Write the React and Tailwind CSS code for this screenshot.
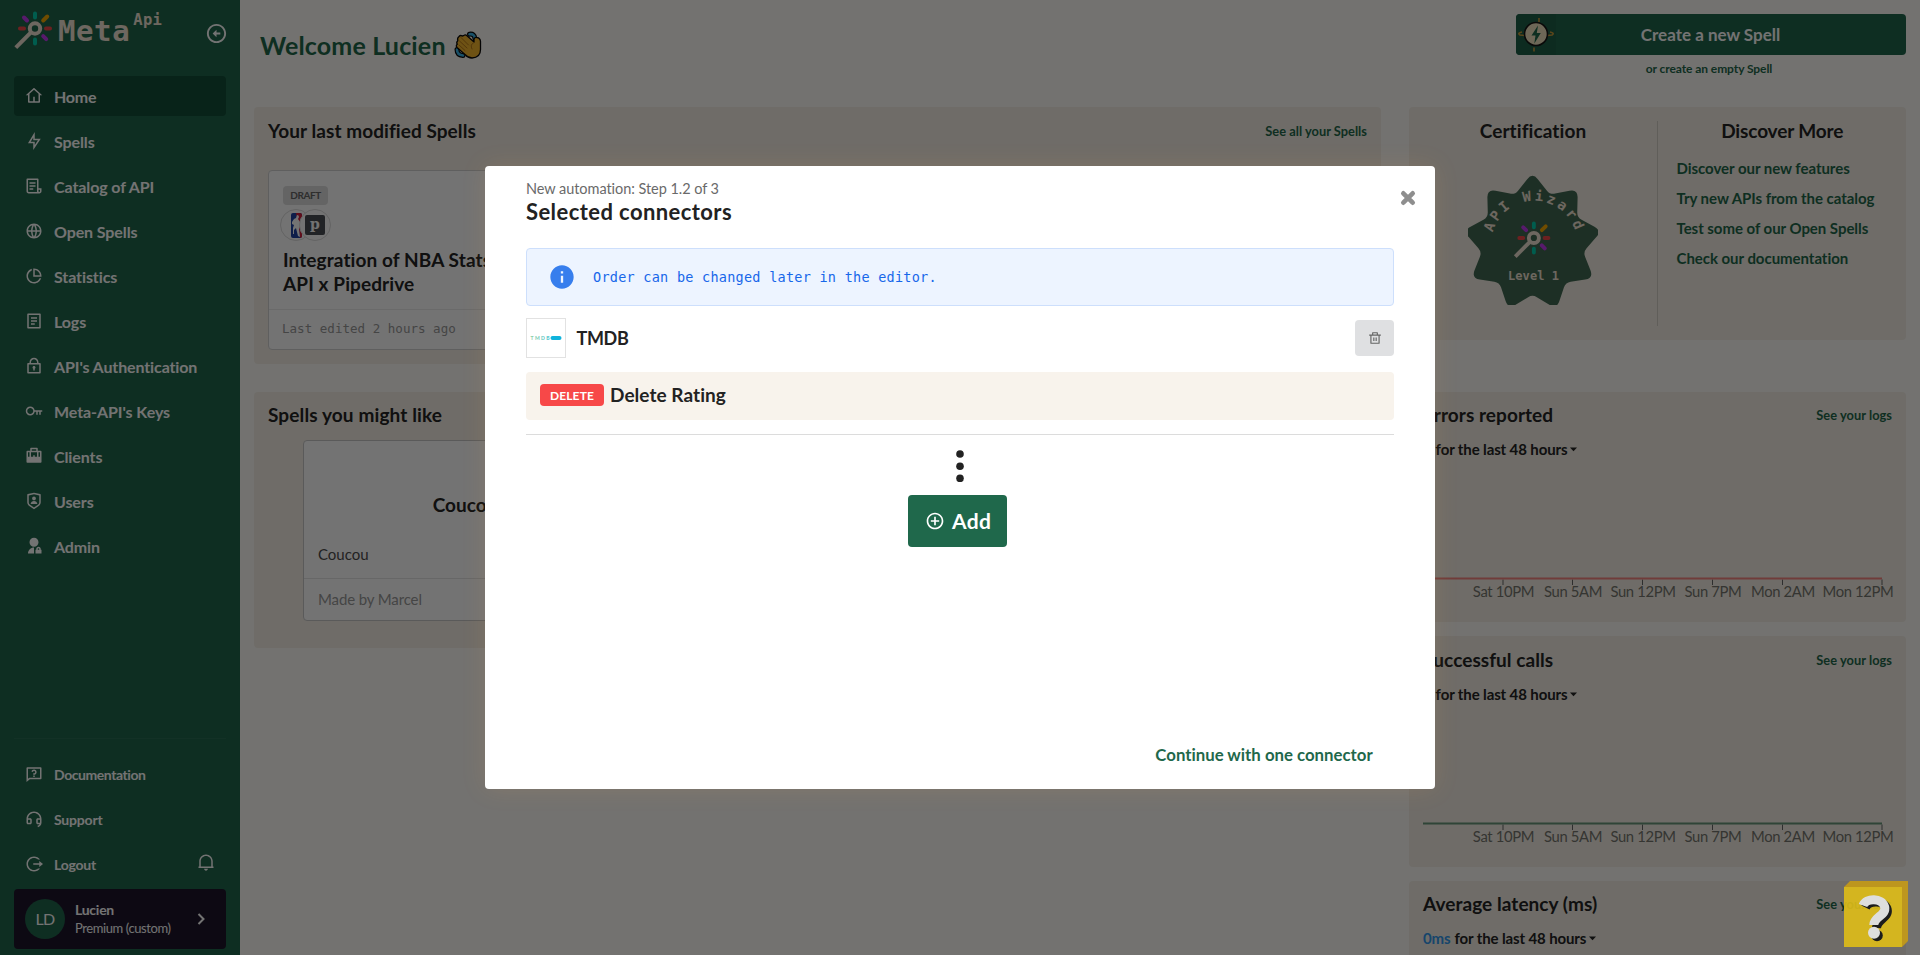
import {
  RiHome4Line, RiFlashlightLine, RiFileList3Line, RiGlobalLine, RiPieChartLine, RiFileList2Line,
  RiLock2Line, RiKeyLine, RiBriefcase5Fill, RiShieldUserLine, RiAdminFill, RiQuestionnaireLine,
  RiCustomerServiceLine, RiLogoutCircleRLine, RiNotification2Line, RiArrowLeftCircleLine,
  RiAddCircleLine, RiDeleteBinLine, RiInformationFill,
} from "react-icons/ri";

const NAV = [
  ["Home", RiHome4Line, "tracking-[-0.25px]"],
  ["Spells", RiFlashlightLine, "tracking-[-0.1px]"],
  ["Catalog of API", RiFileList3Line, "tracking-[-0.1px]"],
  ["Open Spells", RiGlobalLine, "tracking-[-0.1px]"],
  ["Statistics", RiPieChartLine, "tracking-[-0.1px]"],
  ["Logs", RiFileList2Line, "tracking-[-0.1px]"],
  ["API's Authentication", RiLock2Line, "tracking-[-0.12px]"],
  ["Meta-API's Keys", RiKeyLine, "tracking-[-0.08px]"],
  ["Clients", RiBriefcase5Fill, "tracking-[-0.1px]"],
  ["Users", RiShieldUserLine, "tracking-[-0.1px]"],
  ["Admin", RiAdminFill, "tracking-[-0.1px]"],
];

const FOOT = [
  ["Documentation", RiQuestionnaireLine, "tracking-[-0.43px]"],
  ["Support", RiCustomerServiceLine, "tracking-[-0.19px]"],
  ["Logout", RiLogoutCircleRLine, "tracking-[-0.22px]"],
];

function WandShape() {
  return (
    <g strokeLinecap="round" fill="none">
      <g strokeWidth="4">
        <path d="M21 3.5v4M21 29.500v4" stroke="#00cfae" />
        <path d="M6 18.500h4M32 18.500h4" stroke="#f04848" />
        <path d="M10 7.500l3 3M29.200 26.200l3 3" stroke="#c23bf0" />
        <path d="M29.200 10.500l4-4" stroke="#f5a800" />
      </g>
      <g stroke="#f1e4d5" strokeLinecap="butt" strokeWidth="4">
        <circle cx="21" cy="18.500" r="5.200" />
        <path d="M17.200 22.200L1.800 37.700" />
      </g>
    </g>
  );
}

function Sidebar() {
  return (
    <aside className="flex w-[240px] shrink-0 flex-col bg-[#21664c] px-3.5 pb-1.5 text-white">
      <div className="flex h-[76px] items-start justify-between">
        <div className="flex items-start pt-2.5">
          <svg width="44" height="42" viewBox="0 0 44 42" className="shrink-0"><WandShape /></svg>
          <span className="font-['DejaVu_Sans_Mono',monospace] text-[29px] font-bold leading-[42px] tracking-[0.6px] text-[#f1e4d5]">Meta</span>
          <span className="ml-[3px] font-['DejaVu_Sans_Mono',monospace] text-[15.500px] font-bold leading-[20px] tracking-[0.3px] text-[#f1e4d5]">Api</span>
        </div>
        <RiArrowLeftCircleLine className="mr-[-2px] mt-[21.5px] size-[23px]" />
      </div>
      <nav className="flex flex-col gap-[5px]">
        {NAV.map(([label, Icon, tr], i) => (
          <div key={label} className={`flex h-10 items-center gap-[11px] rounded pl-[11px] ${i === 0 ? "bg-[#124e38]" : ""}`}>
            <Icon className="size-[18px]" />
            <span className={`pt-px text-[16px] font-bold leading-5 ${tr}`}>{label}</span>
          </div>
        ))}
      </nav>
      <div className="flex-1" />
      <div className="h-px bg-[#2b6e55]" />
      <div className="mt-[15px] flex flex-col gap-[5px]">
        {FOOT.map(([label, Icon, tr]) => (
          <div key={label} className="flex h-10 items-center gap-[11px] pl-[11px]">
            <Icon className="size-[18px]" />
            <span className={`pt-px text-[14px] font-bold leading-5 ${tr}`}>{label}</span>
            {label === "Logout" && <RiNotification2Line className="mb-1 ml-auto mr-[11px] size-[18px]" />}
          </div>
        ))}
      </div>
      <div className="mt-[5px] flex h-[60px] items-center rounded bg-[#1d162c] pl-[11px]">
        <div className="flex size-10 items-center justify-center rounded-full bg-[#21664c] text-[16px] tracking-[-0.6px]">LD</div>
        <div className="ml-2.5 flex flex-col">
          <span className="text-[14px] font-bold leading-[19px] tracking-[-0.26px]">Lucien</span>
          <span className="text-[13px] leading-[19px] tracking-[-0.42px]">Premium (custom)</span>
        </div>
        <svg width="8" height="12" viewBox="0 0 8 12" className="ml-[27px]"><path d="M1.500 1l5 5-5 5" fill="none" stroke="white" strokeWidth="2" /></svg>
      </div>
    </aside>
  );
}

function WavingHand() {
  return (
    <svg width="28" height="28" viewBox="0 0 28 28">
      <g fill="none" stroke="#0a0a0a" strokeWidth="5" strokeLinecap="round">
        <path d="M15.500 3.200q5-.7 5.500 4.500M3 18.500q0 5.500 6 6" />
      </g>
      <g fill="none" stroke="#3bb3e6" strokeWidth="2.600" strokeLinecap="round">
        <path d="M15.500 3.200q5-.7 5.500 4.500M3 18.500q0 5.500 6 6" />
      </g>
      <path d="M5 5.500q1.500-1.700 3.200-.4L10 4.300q1.500-1 3 .4l7 6.300V8.500q.3-2.500 3-2 3.200.5 3.500 4v8q0 8-8.500 8.500-4 0-7-3.500L3 16.500q-1.500-2 .3-3.200-1.300-2 .5-3.600-.8-2.700 1.200-4.200z" fill="#f4b52e" stroke="#0a0a0a" strokeWidth="1.300" strokeLinejoin="round" />
      <path d="M7 6.500l7.500 7.500M5.500 10l7.500 7M5 14l6 5.500M20 11.500q-4.500 2-2 6.500" fill="none" stroke="#b87a18" strokeWidth="1" strokeLinecap="round" />
    </svg>
  );
}

function SpellOrb() {
  return (
    <svg width="40" height="41" viewBox="0 0 40 41" className="shrink-0">
      <rect width="40" height="41" fill="#1e6047" />
      <g fill="none" stroke="#c99a3a" strokeWidth="1.600">
        <path d="M23 4v4M18 33.500v4M6 18q-5 1-2 3l5 .5M34 18q5 1 2 3l-5 .5" />
      </g>
      <circle cx="20" cy="20" r="11.500" fill="#f1e4c0" stroke="#151515" strokeWidth="1.600" />
      <path d="M22 11.500l-6.500 10h4l-1.200 8 6.500-10.500h-4z" fill="#1f684b" />
    </svg>
  );
}

function Heading({ children, className = "" }) {
  return <h2 className={`text-[19px] font-bold leading-6 text-[#242424] ${className}`}>{children}</h2>;
}

/* Nine-pointed star: every corner is rounded by a quadratic curve through it. */
function starPath(cx, cy, outer, inner) {
  const pts = Array.from({ length: 18 }, (_, i) => {
    const r = i % 2 ? inner : outer;
    const a = (i * Math.PI) / 9;
    return [cx + r * Math.sin(a), cy - r * Math.cos(a)];
  });
  const mix = (p, q, t) => [p[0] + (q[0] - p[0]) * t, p[1] + (q[1] - p[1]) * t];
  return (
    pts.map((p, i) => {
      const t = i % 2 ? 0.18 : 0.3;
      const a = mix(p, pts[(i + 17) % 18], t);
      const b = mix(p, pts[(i + 1) % 18], t);
      return `${i ? "L" : "M"}${a.join(" ")}Q${p.join(" ")} ${b.join(" ")}`;
    }).join("") + "Z"
  );
}

function Badge() {
  return (
    <svg width="130" height="130" viewBox="0 0 130 130">
      <path d={starPath(64.5, 68, 70.500, 51.500)} fill="#426852" />
      <path id="arc" d="M24.500 58.500A43 43 0 0 1 108 58.500" fill="none" />
      <text className="font-['DejaVu_Sans_Mono',monospace] text-[14px] font-bold" fill="#f1e4d5">
        <textPath href="#arc" startOffset="1" textLength="110">API Wizard</textPath>
      </text>
      <g transform="translate(45.500 45) scale(0.97)"><WandShape /></g>
      <text x="65.500" y="104.500" textAnchor="middle" className="font-['DejaVu_Sans_Mono',monospace] text-[12px] font-bold" textLength="51" fill="#f1e4d5">Level 1</text>
    </svg>
  );
}

const TICKS = [[80, "Sat 10PM"], [149.5, "Sun 5AM"], [219.5, "Sun 12PM"], [289.5, "Sun 7PM"], [359.5, "Mon 2AM"], [459, "Mon 12PM"]];

function Metric({ title, value, valueClass, color, className }) {
  return (
    <section className={`rounded bg-[#f5f0e6] px-3.5 ${className}`}>
      <div className="flex items-center justify-between">
        <Heading className="tracking-[0.06px]">{title}</Heading>
        <span className="pt-px text-[12.800px] font-bold tracking-[0.05px] text-[#1f684b]">See your logs</span>
      </div>
      <div className="mt-[9.500px] flex items-center text-[15px] font-bold leading-6 tracking-[-0.12px] text-[#242424]">
        <span className={valueClass}>{value}</span>
        <span className="ml-[4px]">for the last 48 hours</span>
        <svg width="7" height="5" viewBox="0 0 8 5" className="ml-[3px] mt-0.5"><path d="M0 .3h8L4 4.500z" fill="#242424" /></svg>
      </div>
      {color && (
        <svg width="480" height="140" viewBox="0 0 480 140" className="overflow-visible">
          {TICKS.map(([x]) => <path key={x} d={`M${x} 118.500v5.500`} stroke="#666" />)}
          <path d="M0 117.500h459" stroke={color} strokeWidth="2" />
          {TICKS.map(([x, t]) => (
            <text key={t} x={x === 459 ? 435 : x + 0.500} y="136" textAnchor="middle" className="text-[14.800px] tracking-[-0.35px]" fill="#77776f">{t}</text>
          ))}
        </svg>
      )}
    </section>
  );
}

function Dashboard() {
  return (
    <main className="flex min-w-0 flex-1 flex-col bg-[#fffdf9] pl-3.5 pr-3.5">
      <header className="flex h-[107px] shrink-0 items-start justify-between pl-[6px] pt-3.5">
        <div className="mt-[15px] flex items-center gap-[8px]">
          <h1 className="text-[25px] font-bold leading-8 tracking-[0.17px] text-[#1f684b]">Welcome Lucien</h1>
          <WavingHand />
        </div>
        <div className="w-[390px]">
          <div className="flex h-[41px] items-center overflow-hidden rounded bg-[#21664c] text-white">
            <SpellOrb />
            <span className="flex-1 pr-[41px] pt-px text-center text-[17px] font-bold">Create a new Spell</span>
          </div>
          <div className="mt-[4px] pr-3 text-center text-[12px] font-bold leading-5 tracking-[-0.08px] text-[#1f684b]"><span className="ml-[8px]">or create an empty Spell</span></div>
        </div>
      </header>
      <div className="flex gap-7">
        <div className="flex w-[1127px] shrink-0 flex-col gap-7">
          <section className="h-[257px] rounded bg-[#f5f0e6] px-3.5 pt-3">
            <div className="flex items-center justify-between">
              <Heading className="tracking-[0.07px]">Your last modified Spells</Heading>
              <span className="pt-px text-[12.800px] font-bold tracking-[0.03px] text-[#1f684b]">See all your Spells</span>
            </div>
            <div className="mt-[27px] flex h-[180px] w-[360px] flex-col rounded border border-[#d3d3d3] bg-white pt-[15px]">
              <span className="ml-3.5 flex h-[19px] w-[45px] items-center justify-center rounded bg-[#dddddd] text-[10px] font-bold tracking-[-0.4px] text-[#666]">DRAFT</span>
              <div className="ml-[11px] mt-1 flex">
                <div className="flex size-8 items-center justify-center rounded-full border border-[#dcdcdc] bg-white">
                  <svg width="11" height="25" viewBox="0 0 11 25">
                    <rect width="11" height="25" rx="2" fill="#2143a5" />
                    <path d="M5 0h4q2 0 2 2v21q0 2-2 2l-1-9z" fill="#d4213d" />
                    <path d="M6 2q2 0 2 2l-1 2 2 3v4l-1 3 1 8-2-1-2-8-2 2v4H2v-6l1-3-2-1V9l2-3 2-1z" fill="white" />
                  </svg>
                </div>
                <div className="ml-[-13px] flex size-8 items-center justify-center rounded-full border border-[#dcdcdc] bg-white">
                  <span className="flex size-5 items-center justify-center rounded-[2px] bg-[#4b4e54] pb-[3px] font-['DejaVu_Serif',serif] text-[14px] font-bold leading-none text-white">p</span>
                </div>
              </div>
              <h3 className="ml-3.5 mt-[7px] text-[19px] font-bold leading-[24px] tracking-[0.1px] text-[#242424]">Integration of NBA Stats<br />API x Pipedrive</h3>
              <div className="mt-auto flex h-10 items-center border-t border-[#eaeaea] pl-[13px] font-['DejaVu_Sans_Mono',monospace] text-[12.500px] tracking-[0.03px] text-[#999]">Last edited 2 hours ago</div>
            </div>
          </section>
          <section className="h-[256px] rounded bg-[#f5f0e6] px-3.5 pt-[11px]">
            <Heading className="tracking-[0.12px]">Spells you might like</Heading>
            <div className="ml-[35px] mt-[13px] flex h-[181px] w-[324px] flex-col rounded border border-[#c8c8c8] bg-white">
              <Heading className="mt-[52px] text-center">Coucou</Heading>
              <p className="ml-3.5 mt-[25px] text-[15px] leading-6 text-[#4d4d4d]">Coucou</p>
              <div className="mt-auto flex h-[42px] items-center border-t border-[#e4e4e4] pl-3.5 text-[15px] tracking-[-0.12px] text-[#999]">Made by Marcel</div>
            </div>
          </section>
        </div>
        <div className="w-[497px] shrink-0">
          <section className="flex h-[233px] rounded bg-[#f5f0e6] py-3.5">
            <div className="flex w-[249px] flex-col items-center border-r border-[#d6d1c8]">
              <Heading className="mt-[-2px] tracking-[0.1px]">Certification</Heading>
              <div className="mt-[32px]"><Badge /></div>
            </div>
            <div className="flex-1 pl-[18.500px]">
              <Heading className="mt-[-2px] pr-[18px] text-center tracking-[-0.13px]">Discover More</Heading>
              <ul className="mt-[10px] text-[15px] font-bold leading-[30px] tracking-[-0.04px] text-[#1f684b]">
                <li>Discover our new features</li>
                <li>Try new APIs from the catalog</li>
                <li>Test some of our Open Spells</li>
                <li>Check our documentation</li>
              </ul>
            </div>
          </section>
          <Metric title="Errors reported" value="0" color="#f98581" className="mt-[52px] h-[230px] pt-[11px]" valueClass="text-[#f04848]" />
          <Metric title="Successful calls" value="0" color="#68977a" className="mt-3.5 h-[231px] pt-3" valueClass="text-[#1f684b]" />
          <Metric title="Average latency (ms)" value="0ms" className="mt-3.5 h-[231px] pt-[11px]" valueClass="text-[#3399ee]" />
        </div>
      </div>
    </main>
  );
}

function Modal() {
  return (
    <div className="flex h-[623px] w-[950px] flex-col rounded bg-white pl-[41px] pr-[27px] shadow-[0_0_24px_rgba(255,170,80,0.13)]">
      <div className="flex justify-between">
        <div className="pt-3">
          <p className="text-[14.500px] leading-[22px] tracking-[-0.05px] text-[#6a6a6a]">New automation: Step 1.2 of 3</p>
          <h2 className="text-[22px] font-bold leading-[24px] tracking-[0.42px] text-[#222]">Selected connectors</h2>
        </div>
        <svg width="16" height="16" viewBox="0 0 16 16" className="mr-[-8px] mt-6"><path d="M3.300 3.300l9.400 9.400M12.700 3.300l-9.400 9.400" stroke="#8e8e8e" strokeWidth="4.600" strokeLinecap="round" /></svg>
      </div>
      <div className="mr-3.5 mt-6 flex h-[58px] items-center rounded border border-[#cddffc] bg-[#edf4ff] pl-[21px]">
        <RiInformationFill className="size-[28px] text-[#377eed]" />
        <span className="ml-[17px] pt-px font-['DejaVu_Sans_Mono',monospace] text-[13.500px] tracking-[0.26px] text-[#1767ea]">Order can be changed later in the editor.</span>
      </div>
      <div className="mr-3.5 mt-3 flex h-10 items-center">
        <div className="flex size-10 items-center justify-center border border-[#e2e2e2]">
          <svg width="32" height="6" viewBox="0 0 32 6">
            <defs><linearGradient id="tm" x1="0" x2="1"><stop offset="0" stopColor="#90cea1" /><stop offset="1" stopColor="#3cbec9" /></linearGradient></defs>
            <text x="0.500" y="4.800" textLength="19" className="text-[5px] font-bold" fill="url(#tm)">TMDB</text>
            <rect x="20.500" y="1" width="11" height="4" rx="2" fill="#10b3dc" />
          </svg>
        </div>
        <span className="ml-[10.500px] flex-1 text-[18px] font-bold tracking-[-0.35px] text-[#222]">TMDB</span>
        <span className="flex h-9 w-[39px] items-center justify-center rounded bg-[#dfe0e2]"><RiDeleteBinLine className="size-[14px] text-[#666]" /></span>
      </div>
      <div className="mr-3.5 mt-3.5 flex h-12 items-center rounded bg-[#f8f3ec] pb-0.5 pl-3.5">
        <span className="flex h-[22px] w-16 items-center justify-center rounded bg-[#f74848] pt-px text-[12px] font-bold tracking-[0.12px] text-white">DELETE</span>
        <span className="ml-[6px] text-[19px] font-bold leading-6 tracking-[0.05px] text-[#222]">Delete Rating</span>
      </div>
      <div className="mr-3.5 mt-3.5 h-px bg-[#dcdcdc]" />
      <div className="mr-3.5 mt-[15px] flex flex-col items-center">
        <svg width="8" height="32" viewBox="0 0 8 32" fill="#222"><circle cx="4" cy="4" r="3.800" /><circle cx="4" cy="16.200" r="3.800" /><circle cx="4" cy="28.400" r="3.800" /></svg>
        <span className="mr-[5px] mt-[13px] flex h-[52px] w-[99px] items-center gap-[7px] rounded bg-[#1f684b] pl-[17px] text-[21px] font-bold tracking-[0.4px] text-white">
          <RiAddCircleLine className="size-5" />Add
        </span>
      </div>
      <div className="mb-[14px] mr-[11px] mt-auto flex h-[41px] w-[266px] items-center justify-center self-end text-[16.800px] font-bold text-[#1f684b]">Continue with one connector</div>
    </div>
  );
}

function HelpBox() {
  return (
    <svg width="64" height="66" viewBox="0 0 64 66" className="absolute left-[1844px] top-[881px]">
      <g opacity="0.9">
        <path d="M0 6L6 0h58v60l-6 6V6z" fill="#c69b17" />
        <rect y="6" width="58" height="60" fill="#dfbe18" />
      </g>
      <g fill="none" strokeWidth="9" strokeLinejoin="round">
        <path d="M21.500 26.500C25 19 40.500 19 43.200 28.500C45 37 33 38 32.500 47" stroke="#1c1c1c" />
        <path d="M19 24.500C22 16.500 38 16.500 40.700 26C42.500 34.500 30 35.500 29.800 44" stroke="#dededd" />
      </g>
      <circle cx="33" cy="54.500" r="5.800" fill="#1c1c1c" />
      <circle cx="30" cy="51.800" r="6" fill="#dededd" />
    </svg>
  );
}

export default function App() {
  return (
    <div className="relative flex h-[955px] w-[1920px] overflow-hidden font-['Lato',sans-serif] [font-variant-ligatures:none]">
      <Sidebar />
      <Dashboard />
      <div className="absolute inset-0 flex items-center justify-center bg-black/55"><Modal /></div>
      <HelpBox />
    </div>
  );
}
